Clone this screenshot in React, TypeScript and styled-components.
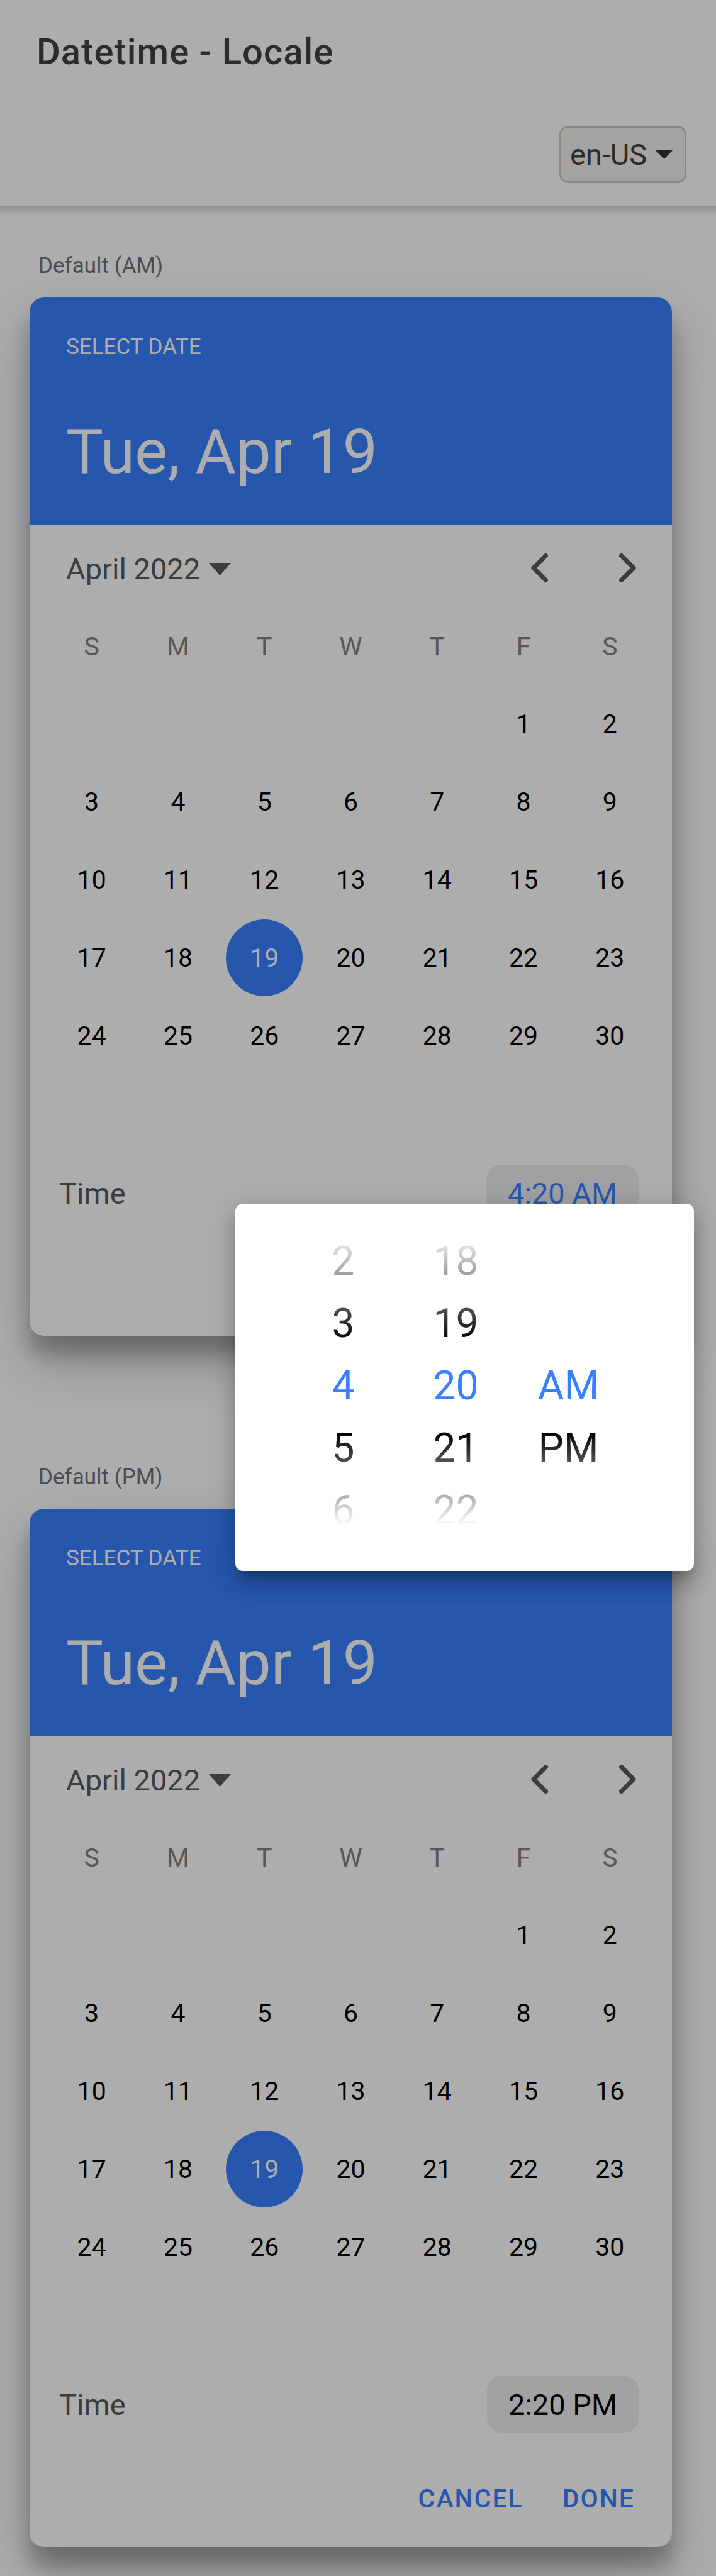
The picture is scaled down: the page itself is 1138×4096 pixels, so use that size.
import React, { useState } from "react";
import styled, { createGlobalStyle } from "styled-components";

const GlobalStyle = createGlobalStyle`
  *, *::before, *::after { box-sizing: border-box; }
  body {
    margin: 0;
    background: #fff;
    color: #000;
    font-family: Roboto, "Liberation Sans", sans-serif;
  }
  button, select { font: inherit; color: inherit; }
  button {
    padding: 0;
    border: 0;
    background: none;
    cursor: pointer;
  }
`;

const Page = styled.div`
  position: relative;
  min-height: 100vh;
  overflow: hidden;
`;

const Header = styled.header`
  display: flex;
  flex-direction: column;
  height: 327px;
`;

const Title = styled.h1`
  margin: 0;
  padding: 0 58px;
  font-size: 58px;
  font-weight: 500;
  line-height: 164px;
  letter-spacing: 1px;
  color: #424242;
`;

const Tools = styled.div`
  display: flex;
  flex: 1;
  align-items: center;
  justify-content: flex-end;
  padding: 0 47px;
`;

const SelectWrap = styled.div`
  display: flex;
  align-items: center;
  position: relative;
`;

const LocaleSelect = styled.select`
  appearance: none;
  height: 91px;
  padding: 0 59px 0 14px;
  border: 3px solid #cdc7be;
  border-radius: 14px;
  background: #f4f1ee;
  font-size: 47px;
  color: #424242;
`;

const SelectArrow = styled.svg`
  position: absolute;
  right: 21px;
  width: 29px;
  height: 15px;
  fill: #2e343a;
  pointer-events: none;
`;

const Content = styled.main`
  display: flex;
  flex-direction: column;
  gap: 204px;
  padding: 75px 70px 46px 47px;
  background: linear-gradient(rgba(0, 0, 0, 0.18), rgba(0, 0, 0, 0.04) 12px, rgba(0, 0, 0, 0)) top / 100% 15px
    no-repeat;
`;

const Section = styled.section`
  display: flex;
  flex-direction: column;
`;

const SectionLabel = styled.h2`
  margin: 0 0 30px;
  padding-left: 14px;
  font-size: 35px;
  font-weight: 400;
  line-height: 41px;
  color: #6f7378;
`;

const Card = styled.article`
  display: flex;
  flex-direction: column;
  border-radius: 23px;
  background: #fff;
  box-shadow: 0 41px 82px rgba(0, 0, 0, 0.25), 0 29px 29px rgba(0, 0, 0, 0.22);
`;

const CardHeader = styled.header`
  display: flex;
  flex-direction: column;
  height: 362px;
  padding: 58px 58px 0;
  border-radius: 23px 23px 0 0;
  background: #3880ff;
  color: #fff;
`;

const Overline = styled.div`
  font-size: 35px;
  line-height: 42px;
  text-transform: uppercase;
`;

const SelectedDate = styled.div`
  margin-top: 87px;
  font-size: 99px;
  line-height: 116px;
`;

const MonthBar = styled.div`
  display: flex;
  align-items: center;
  justify-content: space-between;
  height: 136px;
  padding: 0 57px 0 58px;
  color: #595959;
`;

const MonthButton = styled.button`
  display: flex;
  align-items: center;
  gap: 14px;
  padding-top: 4px;
  font-size: 47px;
  line-height: 56px;
`;

const MonthArrow = styled.svg`
  width: 35px;
  height: 20px;
  fill: currentColor;
`;

const MonthNav = styled.div`
  display: flex;
  gap: 113px;
`;

const NavButton = styled.button`
  display: flex;
  align-items: center;
  justify-content: center;
`;

const Chevron = styled.svg`
  width: 27px;
  height: 46px;
  fill: none;
  stroke: currentColor;
  stroke-width: 7;
  stroke-linecap: round;
  stroke-linejoin: round;
`;

const Calendar = styled.table`
  width: calc(100% - 60px);
  margin: 0 30px;
  border-collapse: collapse;
  table-layout: fixed;
  font-size: 41px;
  text-align: center;
`;

const Weekday = styled.th`
  height: 118px;
  padding: 0 0 4px;
  font-weight: 400;
  color: #808080;
`;

const DayCell = styled.td`
  height: 124px;
  padding: 0;
`;

const Day = styled.button<{ $selected: boolean }>`
  width: 122px;
  height: 122px;
  border-radius: 50%;
  background: ${(p) => (p.$selected ? "#3880ff" : "transparent")};
  color: ${(p) => (p.$selected ? "#fff" : "#000")};
`;

const TimeRow = styled.div`
  display: flex;
  align-items: center;
  justify-content: space-between;
  margin-top: 143px;
  padding: 0 53px 0 47px;
  font-size: 47px;
  color: #595959;
`;

const TimeButton = styled.button<{ $active: boolean }>`
  height: 90px;
  padding: 0 34px;
  border-radius: 23px;
  background: #ededf0;
  color: ${(p) => (p.$active ? "#3880ff" : "#000")};
`;

const Actions = styled.footer<{ $hidden: boolean }>`
  display: flex;
  justify-content: flex-end;
  gap: 62px;
  margin-top: 58px;
  padding: 0 59px 31px;
  visibility: ${(p) => (p.$hidden ? "hidden" : "visible")};
`;

const ActionButton = styled.button`
  height: 93px;
  font-size: 41px;
  font-weight: 500;
  letter-spacing: 2px;
  text-transform: uppercase;
  color: #3880ff;
`;

const Backdrop = styled.div`
  position: absolute;
  inset: 0;
  z-index: 1;
  background: rgba(0, 0, 0, 0.32);
`;

const Popover = styled.div`
  position: absolute;
  top: 1914px;
  right: 35px;
  z-index: 2;
  padding: 42px 110px 47px 82px;
  border-radius: 12px;
  background: #fff;
  box-shadow: 0 15px 15px -9px rgba(0, 0, 0, 0.2), 0 23px 29px 3px rgba(0, 0, 0, 0.14),
    0 9px 41px 6px rgba(0, 0, 0, 0.12);
`;

const Wheels = styled.div`
  display: grid;
  grid-template-columns: repeat(3, 179px);
  mask-image: linear-gradient(transparent 4px, #000 178px, #000 322px, transparent 469px);
`;

const Wheel = styled.div<{ $skip: number }>`
  display: flex;
  flex-direction: column;
  padding-top: ${(p) => p.$skip * 99}px;
`;

const WheelItem = styled.button<{ $selected: boolean }>`
  height: 99px;
  font-size: 64px;
  line-height: 99px;
  color: ${(p) => (p.$selected ? "#3880ff" : "#000")};
`;

const WEEKDAYS = ["Sunday", "Monday", "Tuesday", "Wednesday", "Thursday", "Friday", "Saturday"];
const WEEKS = [0, 1, 2, 3, 4].map((w) => WEEKDAYS.map((_, d) => w * 7 + d - 4));

function DatePicker({ time, active }: { time: string; active: boolean }) {
  const [day, setDay] = useState(19);
  return (
    <Card>
      <CardHeader>
        <Overline>Select Date</Overline>
        <SelectedDate>Tue, Apr 19</SelectedDate>
      </CardHeader>
      <MonthBar>
        <MonthButton type="button">
          April 2022
          <MonthArrow viewBox="0 0 35 20" aria-hidden="true">
            <path d="M0 0h35L17.500 20z" />
          </MonthArrow>
        </MonthButton>
        <MonthNav>
          <NavButton type="button" aria-label="Previous month">
            <Chevron viewBox="0 0 27 46" aria-hidden="true">
              <path d="M23.500 3.500 4 23l19.500 19.500" />
            </Chevron>
          </NavButton>
          <NavButton type="button" aria-label="Next month">
            <Chevron viewBox="0 0 27 46" aria-hidden="true">
              <path d="M3.500 3.500 23 23 3.500 42.500" />
            </Chevron>
          </NavButton>
        </MonthNav>
      </MonthBar>
      <Calendar>
        <thead>
          <tr>
            {WEEKDAYS.map((name) => (
              <Weekday key={name} scope="col" abbr={name}>
                {name[0]}
              </Weekday>
            ))}
          </tr>
        </thead>
        <tbody>
          {WEEKS.map((week, i) => (
            <tr key={i}>
              {week.map((d) => (
                <DayCell key={d}>
                  {d > 0 && (
                    <Day type="button" $selected={d === day} aria-pressed={d === day} onClick={() => setDay(d)}>
                      {d}
                    </Day>
                  )}
                </DayCell>
              ))}
            </tr>
          ))}
        </tbody>
      </Calendar>
      <TimeRow>
        <span>Time</span>
        <TimeButton type="button" $active={active}>
          {time}
        </TimeButton>
      </TimeRow>
      <Actions $hidden={active}>
        <ActionButton type="button">Cancel</ActionButton>
        <ActionButton type="button">Done</ActionButton>
      </Actions>
    </Card>
  );
}

function TimeWheel({ label, items, value, skip = 0 }: { label: string; items: string[]; value: string; skip?: number }) {
  const [selected, setSelected] = useState(value);
  return (
    <Wheel $skip={skip} role="group" aria-label={label}>
      {items.map((item) => (
        <WheelItem key={item} type="button" $selected={item === selected} onClick={() => setSelected(item)}>
          {item}
        </WheelItem>
      ))}
    </Wheel>
  );
}

export default function App() {
  return (
    <Page>
      <GlobalStyle />
      <Header>
        <Title>Datetime - Locale</Title>
        <Tools>
          <SelectWrap>
            <LocaleSelect aria-label="Locale" defaultValue="en-US">
              <option>en-US</option>
            </LocaleSelect>
            <SelectArrow viewBox="0 0 29 15" aria-hidden="true">
              <path d="M0 0h29L14.500 15z" />
            </SelectArrow>
          </SelectWrap>
        </Tools>
      </Header>
      <Content>
        <Section>
          <SectionLabel>Default (AM)</SectionLabel>
          <DatePicker time="4:20 AM" active />
        </Section>
        <Section>
          <SectionLabel>Default (PM)</SectionLabel>
          <DatePicker time="2:20 PM" active={false} />
        </Section>
      </Content>
      <Backdrop />
      <Popover role="dialog" aria-label="Select time">
        <Wheels>
          <TimeWheel label="Hour" items={["2", "3", "4", "5", "6"]} value="4" />
          <TimeWheel label="Minute" items={["18", "19", "20", "21", "22"]} value="20" />
          <TimeWheel label="Day period" items={["AM", "PM"]} value="AM" skip={2} />
        </Wheels>
      </Popover>
    </Page>
  );
}
